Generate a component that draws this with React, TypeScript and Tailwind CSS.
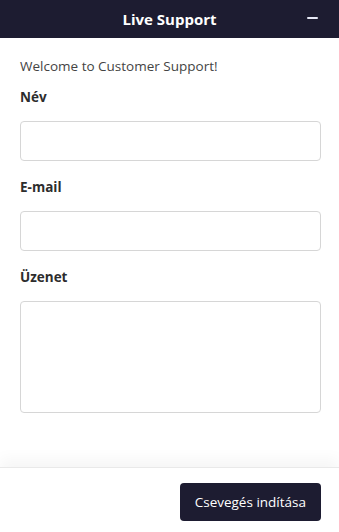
import { useState } from 'react';

export default function App() {
  const [name, setName] = useState('');
  const [email, setEmail] = useState('');
  const [message, setMessage] = useState('');

  return (
    <div
      className="flex h-[532px] w-[339px] flex-col bg-white text-[#212529]"
      style={{ fontFamily: '"Open Sans", "Noto Sans", sans-serif' }}
    >
      <div className="relative flex h-[38px] shrink-0 items-center justify-center bg-[#1d1c31]">
        <h3 className="text-[15px] font-bold text-white">Live Support</h3>
        <button className="absolute right-[20px] top-[11px] flex h-[14px] w-[14px] items-center justify-center">
          <span className="block h-[2px] w-[11px] rounded bg-[#e6e8f5]" />
        </button>
      </div>

      <div className="flex-1 pl-[20px] pr-[18px] pt-[18px]">
        <p className="text-[13.5px] leading-[20px] text-[#444]">Welcome to Customer Support!</p>

        <label className="mt-[11px] block text-[13.5px] font-bold leading-[20px] text-[#2d2d2d]">Név</label>
        <input
          value={name}
          onChange={(e) => setName(e.target.value)}
          className="mt-[14px] block h-[40px] w-full rounded-[4px] border border-[#d6d6d6] px-3 text-sm outline-none"
        />

        <label className="mt-[16px] block text-[13.5px] font-bold leading-[20px] text-[#2d2d2d]">E-mail</label>
        <input
          value={email}
          onChange={(e) => setEmail(e.target.value)}
          className="mt-[14px] block h-[40px] w-full rounded-[4px] border border-[#d6d6d6] px-3 text-sm outline-none"
        />

        <label className="mt-[16px] block text-[13.5px] font-bold leading-[20px] text-[#2d2d2d]">Üzenet</label>
        <textarea
          value={message}
          onChange={(e) => setMessage(e.target.value)}
          className="mt-[14px] block h-[112px] w-full resize-none rounded-[4px] border border-[#d6d6d6] px-3 py-2 text-sm outline-none"
        />
      </div>

      <div className="flex h-[65px] shrink-0 items-start justify-end border-t border-[#e9e9e9] px-[18px] pt-[15px] shadow-[0_-8px_14px_rgba(0,0,0,0.04)]">
        <button className="h-[38px] rounded-[4px] bg-[#1d1c31] px-[15px] text-[13.5px] text-white">
          Csevegés indítása
        </button>
      </div>
    </div>
  );
}
